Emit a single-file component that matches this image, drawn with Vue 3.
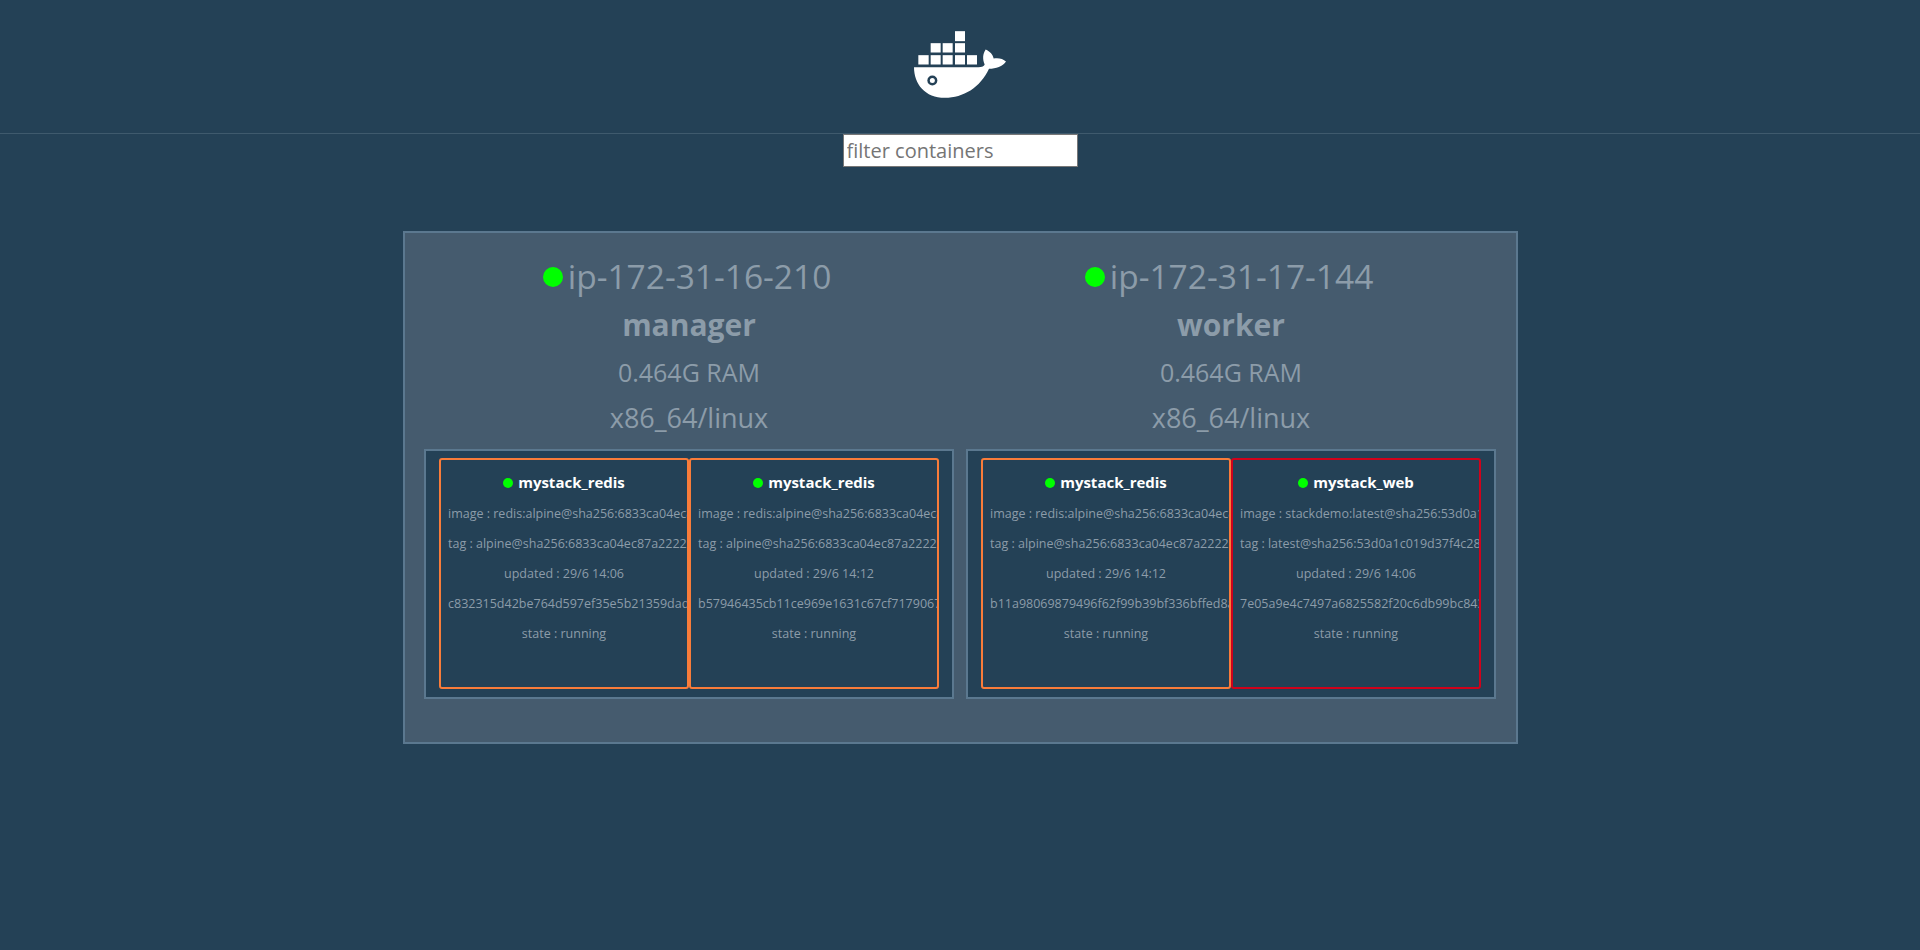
<template>
  <div class="page">
    <header class="top">
      <svg class="logo" viewBox="222 92 276 200" width="92" height="67">
        <g fill="#fff">
          <rect x="345" y="92" width="30" height="30" />
          <rect x="272" y="128" width="30" height="28" />
          <rect x="308" y="128" width="30" height="28" />
          <rect x="345" y="128" width="30" height="28" />
          <rect x="235" y="164" width="31" height="28" />
          <rect x="272" y="164" width="30" height="28" />
          <rect x="308" y="164" width="30" height="28" />
          <rect x="345" y="164" width="30" height="28" />
          <rect x="381" y="164" width="30" height="28" />
          <path d="M222 200 L415 200 C426 200 433 197 434 192 C427 176 428 160 437 147 C450 153 459 163 461 174 C474 171 489 174 498 183 C488 198 468 204 447 205 C420 262 370 292 315 292 C255 292 222 250 222 200 Z" />
        </g>
        <circle cx="277" cy="240" r="15" fill="#244156" />
        <circle cx="277" cy="240" r="7.5" fill="#fff" />
      </svg>
    </header>
    <div class="filterRow">
      <input class="filter" type="text" placeholder="filter containers" />
    </div>
    <section class="swarm">
      <div class="hosts">
        <div class="host" v-for="host in hosts" :key="host.name">
          <div class="hostHead">
            <h2 class="hostName"><span class="hostDot"></span>{{ host.name }}</h2>
            <div class="hostRole">{{ host.role }}</div>
            <div class="hostRam">{{ host.ram }}</div>
            <div class="hostArch">{{ host.arch }}</div>
          </div>
          <div class="tasks">
            <div :class="['task', task.color]" v-for="task in host.tasks" :key="task.id">
              <div class="taskName"><span class="taskDot"></span>{{ task.name }}</div>
              <div class="line">image : {{ task.image }}</div>
              <div class="line">tag : {{ task.tag }}</div>
              <div class="line">updated : {{ task.updated }}</div>
              <div class="line">{{ task.id }}</div>
              <div class="line">state : running</div>
            </div>
          </div>
        </div>
      </div>
    </section>
  </div>
</template>

<script setup>
const redisSha = "6833ca04ec87a2222981f1d5d4b1a0e0a3f7f8f2b4a5e8b2c1e1"
const webSha = "53d0a1c019d37f4c28e0a7d9f34b6e21c8b7a5d4e3f2a1b0c9d8"

const hosts = [
  {
    name: "ip-172-31-16-210",
    role: "manager",
    ram: "0.464G RAM",
    arch: "x86_64/linux",
    tasks: [
      {
        name: "mystack_redis",
        color: "orange",
        image: "redis:alpine@sha256:" + redisSha,
        tag: "alpine@sha256:" + redisSha,
        updated: "29/6 14:06",
        id: "c832315d42be764d597ef35e5b21359dad4c1e7a90b3",
      },
      {
        name: "mystack_redis",
        color: "orange",
        image: "redis:alpine@sha256:" + redisSha,
        tag: "alpine@sha256:" + redisSha,
        updated: "29/6 14:12",
        id: "b57946435cb11ce969e1631c67cf71790672ad4e8f10",
      },
    ],
  },
  {
    name: "ip-172-31-17-144",
    role: "worker",
    ram: "0.464G RAM",
    arch: "x86_64/linux",
    tasks: [
      {
        name: "mystack_redis",
        color: "orange",
        image: "redis:alpine@sha256:" + redisSha,
        tag: "alpine@sha256:" + redisSha,
        updated: "29/6 14:12",
        id: "b11a98069879496f62f99b39bf336bffed8a2c4d7e90",
      },
      {
        name: "mystack_web",
        color: "red",
        image: "stackdemo:latest@sha256:" + webSha,
        tag: "latest@sha256:" + webSha,
        updated: "29/6 14:06",
        id: "7e05a9e4c7497a6825582f20c6db99bc8431f0a2d6e7",
      },
    ],
  },
]
</script>

<style>
html,
body {
  background: #244156;
}
</style>

<style scoped>
.page {
  min-height: 950px;
  background: #244156;
  font-family: "Open Sans", "Liberation Sans", sans-serif;
  overflow: hidden;
}
.top {
  height: 134px;
  border-bottom: 1px solid #3f5a6d;
  display: flex;
  justify-content: center;
  box-sizing: border-box;
  padding-top: 31px;
}
.filterRow {
  display: flex;
  justify-content: center;
}
.filter {
  width: 235px;
  height: 33px;
  box-sizing: border-box;
  border: 1px solid #777;
  padding: 0 3px;
  font-family: inherit;
  font-size: 20px;
  background: #fff;
  outline: none;
}
.swarm {
  width: 1115px;
  height: 513px;
  box-sizing: border-box;
  margin: 64px auto 0;
  background: #455b6e;
  border: 2px solid #5b788f;
}
.hosts {
  display: flex;
  justify-content: center;
  gap: 12px;
}
.host {
  width: 530px;
}
.hostHead {
  height: 216px;
  box-sizing: border-box;
  padding-top: 19px;
  text-align: center;
  color: #8c9ca9;
}
.hostName {
  margin: 0;
  padding-right: 4px;
  font-size: 33.5px;
  font-weight: 400;
  line-height: 49px;
}
.hostDot {
  display: inline-block;
  width: 20px;
  height: 20px;
  margin-right: 5px;
  border-radius: 50%;
  background: #0f0;
  vertical-align: 2px;
}
.hostRole {
  font-size: 30px;
  font-weight: 700;
  line-height: 48px;
}
.hostRam {
  font-size: 25px;
  line-height: 46px;
}
.hostArch {
  font-size: 27px;
  line-height: 46px;
}
.tasks {
  height: 250px;
  box-sizing: border-box;
  background: #244156;
  border: 2px solid #5b788f;
  padding-top: 7px;
  display: flex;
  justify-content: center;
}
.task {
  width: 250px;
  height: 231px;
  box-sizing: border-box;
  border: 2px solid;
  border-radius: 3px;
  padding: 0 7px;
  overflow: hidden;
  text-align: center;
}
.orange {
  border-color: #f97c3a;
}
.red {
  border-color: #d0021b;
}
.taskName {
  margin: 11px 0 6px;
  font-size: 15px;
  font-weight: 700;
  line-height: 22px;
  color: #fff;
}
.taskDot {
  display: inline-block;
  width: 10px;
  height: 10px;
  margin-right: 5px;
  border-radius: 50%;
  background: #0f0;
}
.line {
  font-size: 12.5px;
  line-height: 30px;
  color: #8c9ca9;
  white-space: nowrap;
}
</style>
